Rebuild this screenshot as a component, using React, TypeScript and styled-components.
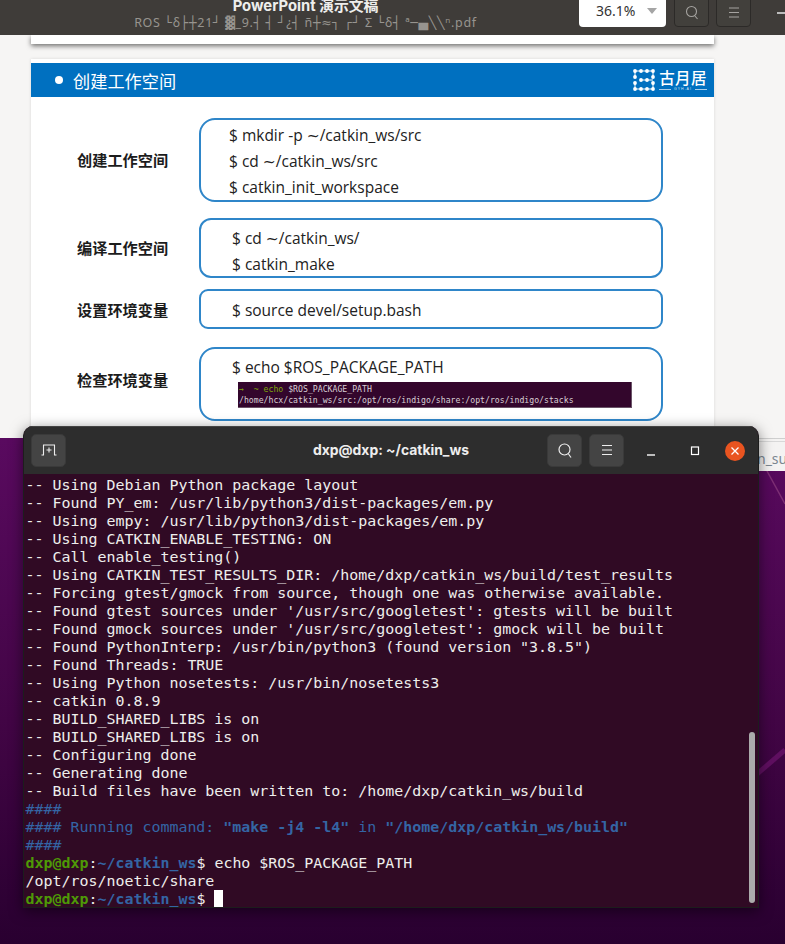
import React from "react";
import styled, { createGlobalStyle } from "styled-components";

const Global = createGlobalStyle`
  html, body { margin: 0; padding: 0; width: 785px; height: 944px; overflow: hidden; background: #2c0030; }
  * { box-sizing: border-box; }
`;
const Desktop = styled.div`
  position: relative; width: 785px; height: 944px; overflow: hidden;
  background: linear-gradient(180deg, #5a0a60 430px, #420545 720px, #290030 944px);
  font-family: "Noto Sans", "Noto Sans CJK SC", sans-serif;
`;
const Streak = styled.svg`position: absolute; left: 0; top: 0;`;

/* PDF viewer window */
const Viewer = styled.div`
  position: absolute; left: 0; top: 0; width: 785px; height: 438px; background: #f6f5f4;
  display: flex; flex-direction: column; overflow: hidden;
`;
const HeaderBar = styled.header`
  height: 35px; flex: none; background: #3f3c39; display: flex; align-items: flex-end; overflow: hidden; position: relative; z-index: 1;
`;
const TitleBlock = styled.div`
  width: 579px; flex: none; padding-bottom: 4px; padding-left: 32px; text-align: center; white-space: nowrap;
`;
const DocTitle = styled.div`
  color: #eeeeec; font-size: 14.8px; font-weight: 700; line-height: 18px; font-family: "Inter", "Noto Sans CJK SC", sans-serif;
`;
const DocSub = styled.div`
  color: #97948f; font-size: 12.5px; line-height: 16px; letter-spacing: .7px; font-family: "Noto Sans", "DejaVu Sans", sans-serif;
`;
const HeaderTools = styled.div`
  display: flex; align-items: stretch; gap: 7px; height: 33px; margin-bottom: 8px; flex: none;
`;
const ZoomBox = styled.div`
  width: 87px; border-radius: 0 0 4px 4px; background: #fff; color: #333; font-size: 14px; display: flex; align-items: center; justify-content: space-between;
  padding: 0 9px 0 17px; margin-right: 1px;
`;
const Caret = styled.span`
  width: 0; height: 0; border-left: 5px solid transparent; border-right: 5px solid transparent; border-top: 6px solid #a5a5a5;
`;
const HeadBtn = styled.div`
  width: 35px; border: 1px solid #2c2a28; border-radius: 4px; background: #42403c; display: flex; align-items: center; justify-content: center; color: #a5a3a0; padding-top: 4px;
`;
const Dash = styled.div`align-self: center; margin: 0 0 9px 26px; width: 8px; height: 1.5px; background: #bbb; flex: none;`;
const Pages = styled.div`
  flex: 1; min-height: 0; display: flex; flex-direction: column; padding-left: 31px; gap: 15px;
`;
const PrevPage = styled.div`
  width: 683px; height: 9px; flex: none; background: #fff; box-shadow: 0 2px 5px rgba(0,0,0,.55);
`;
const Slide = styled.section`
  width: 683px; flex: 1; padding-top: 4px; background: #fff; box-shadow: 0 0 3px rgba(0,0,0,.12); display: flex; flex-direction: column;
`;
const SlideHead = styled.div`
  height: 34px; flex: none; background: #0070c0; color: #fff; display: flex; align-items: center; padding: 0 7px 0 24px;
`;
const Bullet = styled.i`width: 8px; height: 8px; border-radius: 50%; background: #fff; flex: none;`;
const SlideTitle = styled.span`margin-left: 10px; font-size: 17.2px; font-weight: 400; font-family: "Noto Sans CJK SC", sans-serif; flex: 1;`;
const LogoWrap = styled.div`display: flex; align-items: center; gap: 4px; height: 26px;`;
const LogoText = styled.div`display: flex; flex-direction: column; align-items: center; width: 48px;`;
const LogoName = styled.div`font-size: 15.5px; line-height: 16px; font-weight: 500; letter-spacing: .3px; white-space: nowrap; font-family: "Noto Sans CJK SC", sans-serif;`;
const LogoSub = styled.div`margin-top: 2px; font-size: 3.5px; line-height: 5px; letter-spacing: 1px; color: #d5e6f5; white-space: nowrap; display: flex; align-items: center; gap: 3px; font-family: "Liberation Sans", sans-serif;
  &::before, &::after { content: ""; width: 12px; height: 1px; background: #a9cdea; }
`;
const Rows = styled.div`display: flex; flex-direction: column; padding: 21px 0 0 46px;`;
const Row = styled.div<{ $gap: number }>`
  display: grid; grid-template-columns: 122px 464px; align-items: center; margin-bottom: ${p => p.$gap}px;
`;
const RowLabel = styled.div<{ $up: number }>`
  font-size: 15.2px; font-weight: 700; line-height: 20px; color: #1c1c1c; font-family: "Noto Sans CJK SC", sans-serif;
  padding-bottom: ${p => p.$up}px;
`;
const CodeBox = styled.div<{ $h: number; $pl: number; $pt: number; $r: number }>`
  height: ${p => p.$h}px; border: 2px solid #2f86c9; border-radius: ${p => p.$r}px;
  background: #fff; padding: ${p => p.$pt}px 0 0 ${p => p.$pl}px; color: #222; font-size: 15.5px; line-height: 26px; font-family: "Open Sans", "Noto Sans", sans-serif;
`;
const CodeLine = styled.div`white-space: nowrap; height: 26px;`;
const Tilde = styled.span`font-family: "DejaVu Sans", sans-serif;`;
const ShotInset = styled.div`
  margin: 2px 0 0 6px; width: 394px; height: 26px; background: #33062c; color: #d8d0d6; font-family: "DejaVu Sans Mono", monospace; font-size: 8.18px; line-height: 11px; padding: 2px 1px;
  white-space: pre; border-right: 1px solid #6a5468; border-bottom: 1px solid #6a5468;
`;
const Green = styled.span`color: #7fa60a;`;

/* window behind the terminal, right edge */
const BackWindow = styled.div`
  position: absolute; left: 700px; top: 438px; width: 85px; height: 33px; background: #f4f3f2; border-top: 1px solid #cfcfcf; overflow: hidden;
`;
const BackText = styled.div`margin-top: 2px; border-top: 1px solid #d8d8d8; padding: 7px 0 0 57px; font-size: 14px; color: #7b8791; line-height: 20px; font-family: "Noto Sans", sans-serif; white-space: nowrap;`;

/* terminal window */
const Terminal = styled.div`
  position: absolute; left: 23px; top: 426px; width: 736px; height: 482px; border-radius: 10px 10px 0 0; overflow: hidden; background: #300a24;
  box-shadow: 0 3px 14px rgba(0,0,0,.5); display: flex; flex-direction: column; border: 1px solid #1d1d1d; border-top: none;
`;
const TitleBar = styled.div`
  height: 48px; flex: none; background: #2d2d2d; border-top: 1px solid #444; display: grid; grid-template-columns: 1fr auto 1fr; align-items: center; padding: 0 13px 0 7px;
`;
const TitleText = styled.div`color: #eee; font-size: 13.9px; font-weight: 700; font-family: "Inter", "Noto Sans", sans-serif; margin: -1px 0 0 6px;`;
const TBtn = styled.div`
  width: 35px; height: 33px; border-radius: 5px; background: #444; border: 1px solid #3a3a3a; display: flex; align-items: center; justify-content: center; color: #eee; margin-top: -1px;
`;
const BarLeft = styled.div`display: flex;`;
const BarRight = styled.div`display: flex; align-items: center; justify-content: flex-end; gap: 7px;`;
const WinControls = styled.div`display: flex; align-items: center; gap: 16px; margin-left: 6px;`;
const WinCtl = styled.div`width: 28px; height: 20px; display: flex; align-items: center; justify-content: center;`;
const Close = styled.div`width: 20px; height: 20px; border-radius: 50%; background: #e95420; display: flex; align-items: center; justify-content: center;`;
const Body = styled.pre`
  margin: 0; flex: 1; padding: 2px 0 0 1.5px; font-family: "DejaVu Sans Mono", monospace; font-size: 14.95px; line-height: 18px; color: #eeeeec; position: relative; overflow: hidden;
`;
const Blue = styled.span`color: #3465a4;`;
const BlueB = styled.span`color: #3465a4; font-weight: 700;`;
const GreenB = styled.span`color: #4e9a06; font-weight: 700;`;
const Cursor = styled.span`display: inline-block; width: 9px; height: 18px; background: #fff; vertical-align: top;`;
const Scroll = styled.div`position: absolute; right: 3px; top: 258px; width: 6px; height: 171px; border-radius: 3px; background: #ababab;`;

const lines = [
  "-- Using Debian Python package layout",
  "-- Found PY_em: /usr/lib/python3/dist-packages/em.py",
  "-- Using empy: /usr/lib/python3/dist-packages/em.py",
  "-- Using CATKIN_ENABLE_TESTING: ON",
  "-- Call enable_testing()",
  "-- Using CATKIN_TEST_RESULTS_DIR: /home/dxp/catkin_ws/build/test_results",
  "-- Forcing gtest/gmock from source, though one was otherwise available.",
  "-- Found gtest sources under '/usr/src/googletest': gtests will be built",
  "-- Found gmock sources under '/usr/src/googletest': gmock will be built",
  "-- Found PythonInterp: /usr/bin/python3 (found version \"3.8.5\")",
  "-- Found Threads: TRUE",
  "-- Using Python nosetests: /usr/bin/nosetests3",
  "-- catkin 0.8.9",
  "-- BUILD_SHARED_LIBS is on",
  "-- BUILD_SHARED_LIBS is on",
  "-- Configuring done",
  "-- Generating done",
  "-- Build files have been written to: /home/dxp/catkin_ws/build",
].join("\n");

const Prompt = () => (<><GreenB>dxp@dxp</GreenB>:<BlueB>~/catkin_ws</BlueB>$ </>);

const dots: [number, number][] = [[2,3],[8,3],[14,3],[20,3],[2,9],[2,15],[2,21],[8,21],[14,21],[20,21],[20,9],[20,15],[8,12],[14,12]];
const LogoMark = () => (
  <LogoWrap>
    <svg width="22" height="24" viewBox="0 0 22 24" fill="none">
      <path d="M2 3H20M2 3V8M2 16V21H20M20 16V21M20 3V8M8 12H20" stroke="#fff" strokeWidth="1" />
      <g fill="#fff">{dots.map(([x, y], i) => <circle key={i} cx={x} cy={y} r="1.9" />)}</g>
    </svg>
    <LogoText>
      <LogoName>古月居</LogoName>
      <LogoSub>GYH.AI</LogoSub>
    </LogoText>
  </LogoWrap>
);

export default function App() {
  return (
    <Desktop>
      <Global />
      <Streak width="785" height="944" viewBox="0 0 785 944">
        <path d="M767 471L785 504" stroke="#7d2f74" strokeWidth="1.5" />
        <path d="M757 774L785 750" stroke="#5f0f60" strokeWidth="5" />
      </Streak>
      <Viewer>
        <HeaderBar>
          <TitleBlock>
            <DocTitle>PowerPoint 演示文稿</DocTitle>
            <DocSub>ROS └δ├┼21┘ ▓_9.┤ ┤ ┘¿┤ ñ┼≈┐ ┌┘ Σ └δ┤ ª─▄╲╲ⁿ.pdf</DocSub>
          </TitleBlock>
          <HeaderTools>
            <ZoomBox>36.1%<Caret /></ZoomBox>
            <HeadBtn>
              <svg width="14" height="16" viewBox="0 0 14 16" fill="none" stroke="currentColor" strokeWidth="1.1"><circle cx="6.5" cy="6.5" r="5" /><path d="M10 11l2.5 3" /></svg>
            </HeadBtn>
            <HeadBtn>
              <svg width="10" height="11" viewBox="0 0 10 11" stroke="currentColor" strokeWidth="1"><path d="M0 1H10M0 5.5H10M0 10H10" /></svg>
            </HeadBtn>
          </HeaderTools>
          <Dash />
        </HeaderBar>
        <Pages>
          <PrevPage />
          <Slide>
            <SlideHead>
              <Bullet />
              <SlideTitle>创建工作空间</SlideTitle>
              <LogoMark />
            </SlideHead>
            <Rows>
              <Row $gap={16}>
                <RowLabel $up={2}>创建工作空间</RowLabel>
                <CodeBox $h={84} $pl={28} $pt={2} $r={16}>
                  <CodeLine>$ mkdir -p <Tilde>~</Tilde>/catkin_ws/src</CodeLine>
                  <CodeLine>$ cd <Tilde>~</Tilde>/catkin_ws/src</CodeLine>
                  <CodeLine>$ catkin_init_workspace</CodeLine>
                </CodeBox>
              </Row>
              <Row $gap={11}>
                <RowLabel $up={2}>编译工作空间</RowLabel>
                <CodeBox $h={60} $pl={31} $pt={5} $r={12}>
                  <CodeLine>$ cd <Tilde>~</Tilde>/catkin_ws/</CodeLine>
                  <CodeLine>$ catkin_make</CodeLine>
                </CodeBox>
              </Row>
              <Row $gap={18}>
                <RowLabel $up={0}>设置环境变量</RowLabel>
                <CodeBox $h={40} $pl={31} $pt={6} $r={9}>
                  <CodeLine>$ source devel/setup.bash</CodeLine>
                </CodeBox>
              </Row>
              <Row $gap={0}>
                <RowLabel $up={11}>检查环境变量</RowLabel>
                <CodeBox $h={74} $pl={31} $pt={5} $r={16}>
                  <CodeLine>$ echo $ROS_PACKAGE_PATH</CodeLine>
                  <ShotInset><Green>→  ~ echo</Green> $ROS_PACKAGE_PATH{"\n"}/home/hcx/catkin_ws/src:/opt/ros/indigo/share:/opt/ros/indigo/stacks</ShotInset>
                </CodeBox>
              </Row>
            </Rows>
          </Slide>
        </Pages>
      </Viewer>
      <BackWindow><BackText>n_su</BackText></BackWindow>
      <Terminal>
        <TitleBar>
          <BarLeft>
            <TBtn>
              <svg width="16" height="12" viewBox="0 0 16 12" fill="none" stroke="#eee" strokeWidth="1.1"><path d="M.5 11H2.5V1H13.5V11H15.5" /><path d="M8 3.5V8.5M5.5 6H10.5" /></svg>
            </TBtn>
          </BarLeft>
          <TitleText>dxp@dxp: ~/catkin_ws</TitleText>
          <BarRight>
            <TBtn>
              <svg width="16" height="17" viewBox="0 0 16 17" fill="none" stroke="#eee" strokeWidth="1.2"><circle cx="7.5" cy="7.5" r="5.5" /><path d="M11.5 12l2.5 3.5" /></svg>
            </TBtn>
            <TBtn>
              <svg width="12" height="12" viewBox="0 0 12 12" stroke="#eee" strokeWidth="1.1"><path d="M1 1.5H11M1 6H11M1 10.5H11" /></svg>
            </TBtn>
            <WinControls>
              <WinCtl><svg width="8" height="10" viewBox="0 0 8 10" stroke="#eee" strokeWidth="1.4"><path d="M0 9H8" /></svg></WinCtl>
              <WinCtl><svg width="10" height="10" viewBox="0 0 10 10" fill="none" stroke="#fff" strokeWidth="1.2"><rect x="1.5" y="1" width="7" height="7.5" /></svg></WinCtl>
              <Close><svg width="10" height="10" viewBox="0 0 10 10" stroke="#fff" strokeWidth="1.3"><path d="M1.5 1.5L8.5 8.5M8.5 1.5L1.5 8.5" /></svg></Close>
            </WinControls>
          </BarRight>
        </TitleBar>
        <Body>{lines}{"\n"}<Blue>####{"\n"}#### Running command: </Blue><BlueB>"make -j4 -l4"</BlueB><Blue> in </Blue><BlueB>"/home/dxp/catkin_ws/build"</BlueB>{"\n"}<Blue>####</Blue>{"\n"}<Prompt />echo $ROS_PACKAGE_PATH{"\n"}/opt/ros/noetic/share{"\n"}<Prompt /><Cursor /><Scroll /></Body>
      </Terminal>
    </Desktop>
  );
}
